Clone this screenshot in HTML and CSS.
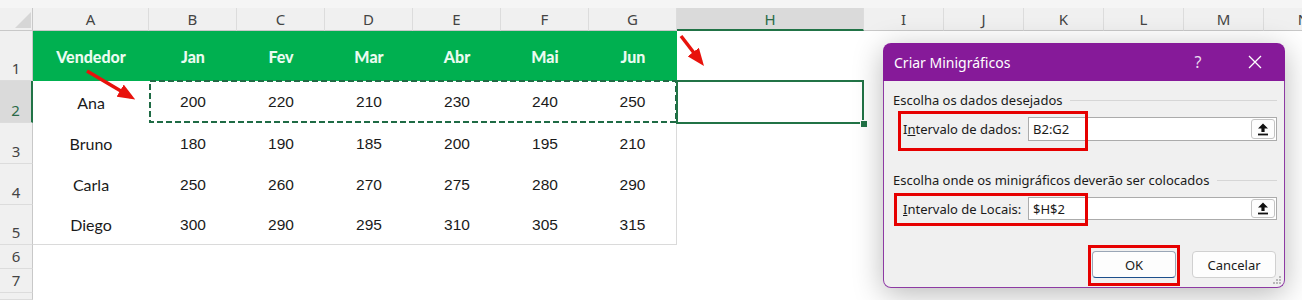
FILE: index.html
```html
<!DOCTYPE html>
<html lang="pt-BR">
<head>
  <meta charset="UTF-8" />
  <title>Criar Minigráficos</title>
  <link rel="stylesheet" href="styles.css">
</head>
<body>
  <div class="page">
    <div class="strip"></div>
    <div class="sheet">
      <div class="corner"><span class="corner-tri"></span></div>
      <div class="colhead">A</div>
      <div class="colhead">B</div>
      <div class="colhead">C</div>
      <div class="colhead">D</div>
      <div class="colhead">E</div>
      <div class="colhead">F</div>
      <div class="colhead">G</div>
      <div class="colhead sel">H</div>
      <div class="colhead">I</div>
      <div class="colhead">J</div>
      <div class="colhead">K</div>
      <div class="colhead">L</div>
      <div class="colhead">M</div>
      <div class="colhead">N</div>

      <div class="rowhead">1</div>
      <div class="cell head">Vendedor</div>
      <div class="cell head">Jan</div>
      <div class="cell head">Fev</div>
      <div class="cell head">Mar</div>
      <div class="cell head">Abr</div>
      <div class="cell head">Mai</div>
      <div class="cell head">Jun</div>

      <div class="rowhead sel">2</div>
      <div class="cell name">Ana</div>
      <div class="cell num">200</div>
      <div class="cell num">220</div>
      <div class="cell num">210</div>
      <div class="cell num">230</div>
      <div class="cell num">240</div>
      <div class="cell num edge">250</div>

      <div class="rowhead">3</div>
      <div class="cell name">Bruno</div>
      <div class="cell num">180</div>
      <div class="cell num">190</div>
      <div class="cell num">185</div>
      <div class="cell num">200</div>
      <div class="cell num">195</div>
      <div class="cell num edge">210</div>

      <div class="rowhead">4</div>
      <div class="cell name">Carla</div>
      <div class="cell num">250</div>
      <div class="cell num">260</div>
      <div class="cell num">270</div>
      <div class="cell num">275</div>
      <div class="cell num">280</div>
      <div class="cell num edge">290</div>

      <div class="rowhead">5</div>
      <div class="cell name foot">Diego</div>
      <div class="cell num foot">300</div>
      <div class="cell num foot">290</div>
      <div class="cell num foot">295</div>
      <div class="cell num foot">310</div>
      <div class="cell num foot">305</div>
      <div class="cell num foot edge">315</div>

      <div class="rowhead">6</div>
      <div class="rowhead">7</div>
      <div class="rowhead"></div>
    </div>

    <!-- copy range B2:G2 -->
    <svg class="ants" width="528" height="43" viewBox="0 0 528 43">
      <rect x="1" y="1" width="526" height="41" fill="none" stroke="#1f6b45" stroke-width="2" stroke-dasharray="6 3" />
    </svg>
    <div class="active-cell"><span class="fill-handle"></span></div>

    <svg class="arrows" width="1302" height="300" viewBox="0 0 1302 300">
      <defs>
        <marker id="head" markerWidth="5" markerHeight="4" refX="3.6" refY="2" orient="auto" markerUnits="strokeWidth">
          <path d="M0,0 L5,2 L0,4 Z" fill="#e8120c" />
        </marker>
      </defs>
      <line x1="87" y1="71" x2="131" y2="97" stroke="#e8120c" stroke-width="3.5" marker-end="url(#head)" />
      <line x1="681" y1="36" x2="701" y2="62" stroke="#e8120c" stroke-width="3.5" marker-end="url(#head)" />
    </svg>

    <div class="dialog">
      <div class="dlg-title">
        <span class="dlg-name">Criar Minigráficos</span>
        <span class="dlg-help">?</span>
        <span class="dlg-close">
          <svg width="14" height="14" viewBox="0 0 14 14">
            <path d="M1 1 L13 13 M13 1 L1 13" stroke="#fff" stroke-width="1.3" />
          </svg>
        </span>
      </div>
      <div class="dlg-body">
        <div class="legend"><span>Escolha os dados desejados</span></div>
        <div class="field">
          <label>I<u>n</u>tervalo de dados:</label>
          <div class="input">
            <span>B2:G2</span>
            <button class="pick">
              <svg width="12" height="13" viewBox="0 0 12 13"><path d="M6 0.5 L11 5.5 H7.6 V9 H4.4 V5.5 H1 Z" fill="#111" /><rect x="1" y="10.6" width="10" height="1.8" fill="#111" /></svg>
            </button>
          </div>
        </div>
        <div class="legend second"><span>Escolha onde os minigráficos deverão ser colocados</span></div>
        <div class="field low">
          <label><u>I</u>ntervalo de Locais:</label>
          <div class="input">
            <span>$H$2</span>
            <button class="pick">
              <svg width="12" height="13" viewBox="0 0 12 13"><path d="M6 0.5 L11 5.5 H7.6 V9 H4.4 V5.5 H1 Z" fill="#111" /><rect x="1" y="10.6" width="10" height="1.8" fill="#111" /></svg>
            </button>
          </div>
        </div>
        <div class="buttons">
          <button class="btn default">OK</button>
          <button class="btn">Cancelar</button>
        </div>

        <span class="mark mark-data"></span>
        <span class="mark mark-place"></span>
        <span class="mark mark-ok"></span>

        <svg class="grip" width="10" height="10" viewBox="0 0 10 10">
          <rect x="7" y="1" width="2" height="2" fill="#b8b8b8" />
          <rect x="4" y="4" width="2" height="2" fill="#b8b8b8" />
          <rect x="7" y="4" width="2" height="2" fill="#b8b8b8" />
          <rect x="1" y="7" width="2" height="2" fill="#b8b8b8" />
          <rect x="4" y="7" width="2" height="2" fill="#b8b8b8" />
          <rect x="7" y="7" width="2" height="2" fill="#b8b8b8" />
        </svg>
      </div>
    </div>
  </div>
</body>
</html>
```

FILE: styles.css
```css
* {
  margin: 0; padding: 0; box-sizing: border-box;
}
html, body {
  width: 100%; height: 100%;
  overflow: hidden;
  background: #fff;
}
body {
  font-family: 'Liberation Sans', Arial, sans-serif;
  color: #1a1a1a;
}
.page {
  position: relative;
  width: 1302px;
  height: 300px;
  overflow: hidden;
}
.strip {
  height: 8px;
  background: #f5f5f5;
}

/* sheet grid */
.sheet {
  display: grid;
  grid-template-columns: 33px 116px repeat(6, 88px) 187px repeat(6, 80px);
  grid-template-rows: 23px 50px 42px 41px 41px 40px 24px 24px 1fr;
  height: 292px;
}
.corner {
  background: #f0f0f0;
  border-right: 1px solid #c8c8c8;
  border-bottom: 1px solid #c8c8c8;
  display: flex;
  align-items: flex-end;
  justify-content: flex-end;
  padding: 0 1px 2px 0;
}
.corner-tri {
  width: 0; height: 0;
  border-left: 16px solid transparent;
  border-bottom: 16px solid #d6d6d6;
}
.colhead {
  display: flex;
  align-items: center;
  justify-content: center;
  background: #f0f0f0;
  border-right: 1px solid #dcdcdc;
  border-bottom: 1px solid #c8c8c8;
  font-family: 'Noto Sans', sans-serif;
  font-size: 15px;
  color: #444;
}
.colhead.sel {
  background: #dadada;
  border-bottom: 2px solid #217346;
  color: #2b6a47;
}
.rowhead {
  grid-column: 1;
  display: flex;
  align-items: flex-end;
  justify-content: center;
  padding-bottom: 1px;
  background: #f0f0f0;
  border-right: 1px solid #c8c8c8;
  border-bottom: 1px solid #dcdcdc;
  font-family: 'Noto Sans', sans-serif;
  font-size: 15px;
  line-height: 21px;
  color: #444;
}
.rowhead.sel {
  background: #dadada;
  border-right: 2px solid #217346;
  color: #2b6a47;
}
.cell {
  display: flex;
  align-items: center;
  justify-content: center;
  font-size: 15.5px;
}
.cell.head {
  background: #00b050;
  color: #eafbf0;
  font-family: Lato, sans-serif;
  font-weight: 900;
  font-size: 16px;
}
.cell.name {
  font-family: Lato, sans-serif;
  font-size: 16px;
}
.cell.num {
  font-family: 'Liberation Sans', Arial, sans-serif;
}
.cell.edge { border-right: 1px solid #dadada; }
.cell.foot { border-bottom: 1px solid #dadada; }

/* selection overlays */
.ants {
  position: absolute;
  left: 149px;
  top: 80px;
}
.active-cell {
  position: absolute;
  left: 676px;
  top: 80px;
  width: 188px;
  height: 44px;
  border: 2px solid #217346;
}
.fill-handle {
  position: absolute;
  right: -5px;
  bottom: -5px;
  width: 6px;
  height: 6px;
  background: #217346;
  outline: 1px solid #fff;
}
.arrows {
  position: absolute;
  left: 0; top: 0;
  pointer-events: none;
}

/* dialog */
.dialog {
  position: absolute;
  left: 883px;
  top: 43px;
  width: 402px;
  height: 245px;
  border-radius: 8px;
  box-shadow: 0 6px 30px rgba(0,0,0,0.28);
  font-family: 'Noto Sans', sans-serif;
  font-size: 13px;
  color: #1a1a1a;
}
.dlg-title {
  height: 38px;
  display: flex;
  align-items: center;
  padding-left: 11px;
  background: #861a99;
  border-radius: 8px 8px 0 0;
  color: #fff;
}
.dlg-name {
  flex: 1;
  font-size: 14px;
}
.dlg-help {
  width: 30px;
  margin-right: 27px;
  text-align: center;
  font-size: 16px;
  color: #eadcee;
}
.dlg-close {
  width: 30px;
  margin-right: 15px;
  display: flex;
  justify-content: center;
}
.dlg-body {
  position: relative;
  height: 207px;
  padding: 10px 7px 0 9px;
  background: #f0f0f0;
  border: 1px solid #8d3aa3;
  border-top: none;
  border-radius: 0 0 8px 8px;
}
.legend {
  display: flex;
  align-items: center;
  gap: 8px;
  line-height: 18px;
}
.legend::after {
  content: '';
  flex: 1;
  height: 1px;
  background: #d6d6d6;
}
.legend.second { margin-top: 30px; }
.field {
  display: flex;
  align-items: center;
  margin-top: 8px;
  padding-left: 10px;
  height: 24px;
}
.field.low { height: 23px; }
.field label {
  width: 125px;
}
.input {
  flex: 1;
  height: 100%;
  display: flex;
  align-items: center;
  padding: 0 1px 0 4px;
  background: #fff;
  border: 1px solid #ababab;
}
.input span { flex: 1; }
.pick {
  width: 24px;
  height: calc(100% - 2px);
  display: flex;
  align-items: center;
  justify-content: center;
  background: #fdfdfd;
  border: 1px solid #c4c4c4;
  border-radius: 3px;
}
.buttons {
  display: flex;
  justify-content: flex-end;
  gap: 16px;
  margin-top: 31px;
  padding-right: 1px;
}
.btn {
  width: 84px;
  height: 27px;
  background: #fdfdfd;
  border: 1px solid #d0d0d0;
  border-radius: 4px;
  font-family: 'Noto Sans', sans-serif;
  font-size: 13px;
  color: #1a1a1a;
}
.btn.default {
  border-color: #9aa6b6;
  border-bottom-color: #1d4f8c;
}
.mark {
  position: absolute;
  border: 3px solid #e60000;
}
.mark-data { left: 14px; top: 30px; width: 190px; height: 40px; }
.mark-place { left: 10px; top: 112px; width: 194px; height: 33px; }
.mark-ok { left: 204px; top: 164px; width: 92px; height: 41px; }
.grip {
  position: absolute;
  right: 2px;
  bottom: 2px;
}
```
